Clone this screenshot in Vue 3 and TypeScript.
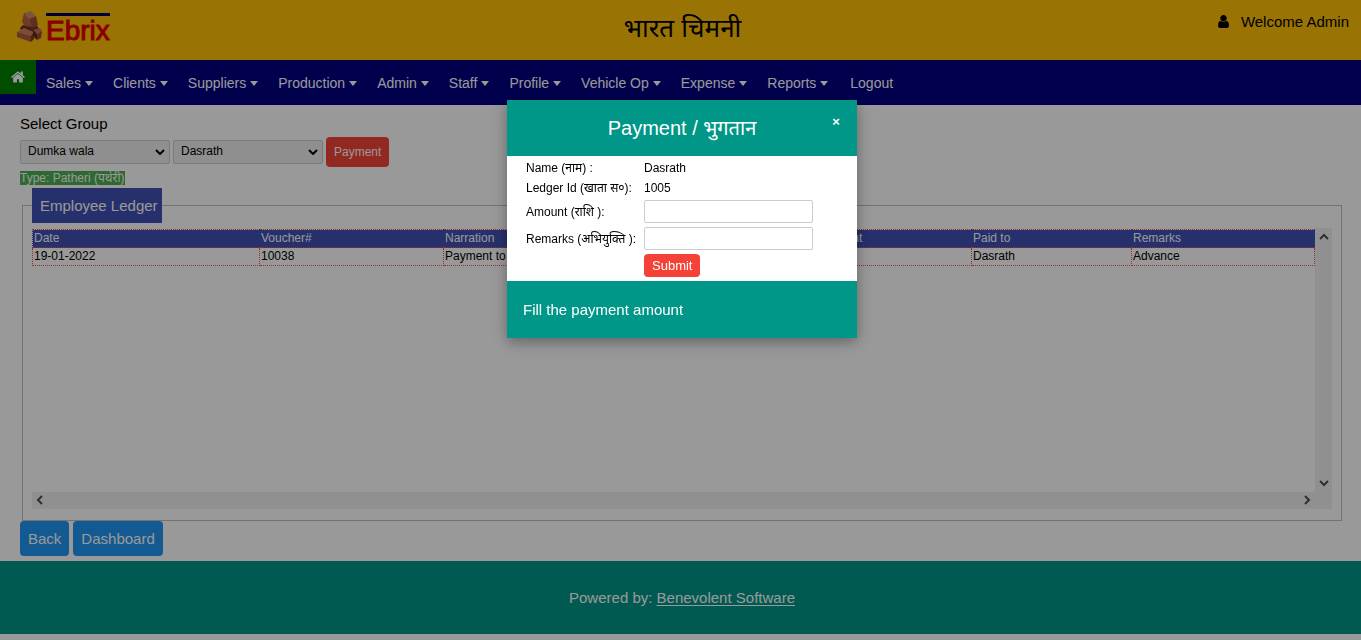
<script setup lang="ts">
import { ref } from 'vue'

interface LedgerRow {
  date: string
  voucher: string
  narration: string
  amount: string
  paidTo: string
  remarks: string
}

const menus: string[] = ['Sales', 'Clients', 'Suppliers', 'Production', 'Admin', 'Staff', 'Profile', 'Vehicle Op', 'Expense', 'Reports']
const columns: string[] = ['Date', 'Voucher#', 'Narration', 'Amount', 'Paid to', 'Remarks']
const rows: LedgerRow[] = [
  { date: '19-01-2022', voucher: '10038', narration: 'Payment to Dasrath', amount: '', paidTo: 'Dasrath', remarks: 'Advance' },
]

const group = ref('Dumka wala')
const employee = ref('Dasrath')
const amount = ref('')
const remarks = ref('')
const modalOpen = ref(true)
</script>

<template>
  <div class="page">
    <header class="banner">
      <a class="logo" href="#" aria-label="Ebrix">
        <svg class="bricks" viewBox="0 0 27 34" aria-hidden="true">
          <path d="M4 18l3-3 14 1 3 4-8 5-10-3z" fill="#74331f" />
          <path d="M1 22l7-4 10 4-3 4z" fill="#c98062" />
          <path d="M1 22l14 4v6L1 27z" fill="#b05a3e" />
          <path d="M15 26l3-4v7l-3 3z" fill="#7a3624" />
          <path d="M17 20l7-2 2 3-5 3z" fill="#c07656" />
          <path d="M21 24l5-3-1 7-4 2z" fill="#9a4a32" />
          <path d="M17 20l4 4v6l-3-3z" fill="#5e2818" />
          <path d="M8 3l7-2 5 5-7 3z" fill="#cf8a6a" />
          <path d="M8 3l5 6 4 8-8-1-3-4z" fill="#b86246" />
          <path d="M13 9l7-3 2 9-5 3z" fill="#a04e36" />
        </svg>
        <span class="brand">Ebrix</span>
      </a>
      <h1>भारत चिमनी</h1>
      <div class="welcome">
        <svg viewBox="256 128 1280 1536" aria-hidden="true">
          <path d="M1536 1399q0 109-62.500 187t-150.500 78h-854q-88 0-150.500-78t-62.500-187q0-85 8.500-160.500t31.500-152 58.500-131 94-89 134.500-34.500q131 128 313 128t313-128q76 0 134.500 34.500t94 89 58.500 131 31.500 152 8.500 160.500zm-256-887q0 159-112.500 271.500t-271.500 112.500-271.500-112.500-112.500-271.500 112.500-271.500 271.500-112.500 271.500 112.500 112.500 271.500z" />
        </svg>
        <span>Welcome Admin</span>
      </div>
    </header>

    <nav class="menu">
      <a class="home" href="#" aria-label="Home">
        <svg viewBox="0 224 1664 1344" aria-hidden="true">
          <path d="M1408 992v480q0 26-19 45t-45 19h-384v-384h-256v384h-384q-26 0-45-19t-19-45v-480q0-1 .5-3t.5-3l575-474 575 474q1 2 1 6zm223-69l-62 74q-8 9-21 11h-3q-13 0-21-7l-692-577-692 577q-12 8-24 7-13-2-21-11l-62-74q-8-10-7-23.500t11-21.500l719-599q32-26 76-26t76 26l244 204v-195q0-14 9-23t23-9h192q14 0 23 9t9 23v408l219 182q10 8 11 21.500t-7 23.500z" />
        </svg>
      </a>
      <a v-for="item in menus" :key="item" class="item" href="#">
        {{ item }}<span class="caret"></span>
      </a>
      <a class="item logout" href="#">Logout</a>
    </nav>

    <main>
      <label class="group-label" for="group">Select Group</label>
      <div class="filters">
        <div class="select">
          <select id="group" v-model="group"><option>Dumka wala</option></select>
          <svg viewBox="0 0 10 6" aria-hidden="true"><path d="M1 1l4 4 4-4" /></svg>
        </div>
        <div class="select">
          <select v-model="employee" aria-label="Employee"><option>Dasrath</option></select>
          <svg viewBox="0 0 10 6" aria-hidden="true"><path d="M1 1l4 4 4-4" /></svg>
        </div>
        <button class="pay" type="button" @click="modalOpen = true">Payment</button>
      </div>
      <div class="type"><span>Type: Patheri (पथेरी)</span></div>

      <fieldset>
        <legend>Employee Ledger</legend>
        <div class="scroller">
          <div class="view">
            <table class="ledger">
              <colgroup>
                <col class="c-date" /><col class="c-voucher" /><col /><col class="c-amount" /><col class="c-paid" /><col class="c-remarks" />
              </colgroup>
              <thead>
                <tr><th v-for="c in columns" :key="c" scope="col">{{ c }}</th></tr>
              </thead>
              <tbody>
                <tr v-for="r in rows" :key="r.voucher">
                  <td>{{ r.date }}</td>
                  <td>{{ r.voucher }}</td>
                  <td>{{ r.narration }}</td>
                  <td>{{ r.amount }}</td>
                  <td>{{ r.paidTo }}</td>
                  <td>{{ r.remarks }}</td>
                </tr>
              </tbody>
            </table>
          </div>
          <div class="bar vertical" aria-hidden="true">
            <svg viewBox="0 0 10 8"><path d="M1 6l4-4 4 4" /></svg>
            <svg viewBox="0 0 10 8"><path d="M1 2l4 4 4-4" /></svg>
          </div>
          <div class="bar horizontal" aria-hidden="true">
            <svg viewBox="0 0 8 10"><path d="M6 1L2 5l4 4" /></svg>
            <svg viewBox="0 0 8 10"><path d="M2 1l4 4-4 4" /></svg>
          </div>
          <div class="bar"></div>
        </div>
      </fieldset>

      <div class="actions">
        <button type="button">Back</button>
        <button type="button">Dashboard</button>
      </div>
    </main>

    <footer class="foot">Powered by: <a href="#">Benevolent Software</a></footer>

    <div v-if="modalOpen" class="overlay">
      <section class="modal" role="dialog" aria-modal="true" aria-labelledby="modal-title">
        <header class="modal-head">
          <h2 id="modal-title">Payment / भुगतान</h2>
          <button class="close" type="button" aria-label="Close" @click="modalOpen = false">×</button>
        </header>
        <form class="form" @submit.prevent>
          <span class="short">Name (नाम) :</span><span>Dasrath</span>
          <span class="short">Ledger Id (खाता स०):</span><span>1005</span>
          <label for="amount">Amount (राशि ):</label><input id="amount" v-model="amount" type="text" />
          <label for="remarks">Remarks (अभियुक्ति ):</label><input id="remarks" v-model="remarks" type="text" />
          <button class="submit" type="submit">Submit</button>
        </form>
        <footer class="modal-foot">Fill the payment amount</footer>
      </section>
    </div>
  </div>
</template>

<style>
body {
  margin: 0;
  background: #fff;
}
</style>

<style scoped>
.page {
  min-height: 100vh;
  font: 15px/22px "Liberation Sans", Arial, "Noto Sans", sans-serif;
  color: #000;
}
.page *,
.page *::before {
  box-sizing: border-box;
}
button,
input,
select {
  font-family: inherit;
}
button {
  border: 0;
  cursor: pointer;
  color: #fff;
}
h1,
h2 {
  margin: 0;
  font-weight: 400;
}
.banner {
  display: grid;
  grid-template-columns: 1fr auto 1fr;
  height: 60px;
  padding: 0 12px 0 16px;
  background: #ffc107;
}
.logo {
  display: flex;
  align-items: flex-start;
  padding-top: 10px;
  text-decoration: none;
  color: #e60000;
}
.bricks {
  width: 27px;
  height: 34px;
}
.brand {
  margin: 3px 0 0 3px;
  border-top: 3px solid #000060;
  font-size: 28px;
  line-height: 30px;
  -webkit-text-stroke: 1px #e60000;
}
h1 {
  padding-top: 8px;
  font-size: 26px;
  line-height: 40px;
}
.welcome {
  display: flex;
  justify-content: flex-end;
  gap: 12px;
  padding-top: 11px;
}
.welcome svg {
  width: 11px;
  height: 13px;
  margin-top: 4px;
}
.menu {
  display: flex;
  align-items: flex-start;
  height: 45px;
  background: #000080;
}
.menu a {
  color: #fff;
  text-decoration: none;
}
.home {
  display: flex;
  align-items: center;
  justify-content: center;
  width: 36px;
  height: 34px;
  background: #008000;
}
.home svg {
  width: 14px;
  height: 12px;
  fill: #fff;
}
.item {
  display: flex;
  align-items: center;
  gap: 4px;
  padding: 12px 10px;
  font-size: 14px;
}
.logout {
  padding-left: 12px;
}
.caret {
  border: 4px solid transparent;
  border-top: 5px solid #fff;
  border-bottom: 0;
}
main {
  padding: 8px 20px 5px;
}
.group-label {
  display: block;
}
.filters {
  display: flex;
  align-items: center;
  gap: 3px;
  margin-top: 2px;
}
.select {
  position: relative;
}
select {
  display: block;
  appearance: none;
  width: 150px;
  height: 24px;
  padding: 0 7px 2px;
  border: 1px solid #ccc;
  border-radius: 2px;
  background: #efefef;
  color: #000;
  font-size: 12px;
}
.select svg {
  position: absolute;
  right: 5px;
  top: 9px;
  width: 10px;
  height: 6px;
  pointer-events: none;
}
.select path,
.bar path {
  fill: none;
  stroke: #000;
  stroke-width: 2;
}
.bar path {
  stroke: #505050;
}
.pay {
  height: 30px;
  padding: 0 8px;
  border-radius: 4px;
  background: #f44336;
  font-size: 12px;
}
.type {
  height: 21px;
  padding-top: 4px;
  font-size: 12px;
  line-height: 14px;
}
.type span {
  display: inline-block;
  background: #4caf50;
  color: #fff;
}
fieldset {
  min-width: 0;
  margin: 0 -1px 0 2px;
  padding: 5px 9px 11px;
  border: 1px solid #c0c0c0;
}
legend {
  padding: 7px 4px 6px 8px;
  background: #3f51b5;
  color: #fff;
}
.scroller {
  display: grid;
  grid-template-columns: minmax(0, 1fr) 17px;
  grid-template-rows: 264px 17px;
}
.view {
  overflow: hidden;
  padding-top: 1px;
}
.bar {
  display: flex;
  justify-content: space-between;
  align-items: center;
  background: #f0f0f0;
}
.vertical {
  flex-direction: column;
  padding: 5px 0;
}
.horizontal {
  padding: 0 4px 1px;
}
.vertical svg {
  width: 10px;
  height: 8px;
}
.horizontal svg {
  width: 8px;
  height: 10px;
}
.ledger {
  width: 100%;
  table-layout: fixed;
  border-collapse: collapse;
  font-size: 12px;
  line-height: 17px;
}
.c-date {
  width: 227px;
}
.c-voucher {
  width: 184px;
}
.c-amount {
  width: 152px;
}
.c-paid {
  width: 160px;
}
.c-remarks {
  width: 183px;
}
th,
td {
  padding: 0 1px;
  border: 1px dotted #ff4d4d;
  text-align: left;
  font-weight: 400;
}
th {
  background: #3f51b5;
  color: #fff;
  border-left-color: #3f51b5;
  border-right-color: #3f51b5;
}
.actions {
  display: flex;
  gap: 4px;
}
.actions button {
  height: 35px;
  padding: 0 8px;
  border-radius: 4px;
  background: #2196f3;
  font-size: 15px;
}
.foot {
  padding: 26px 0 25px 3px;
  background: #009688;
  color: #fff;
  text-align: center;
}
.foot a {
  color: inherit;
  text-underline-offset: 2px;
}
.overlay {
  position: fixed;
  inset: 0;
  padding: 100px 0 0 3px;
  background: rgba(0, 0, 0, 0.4);
}
.modal {
  width: 350px;
  margin: 0 auto;
  background: #fff;
  box-shadow: 0 4px 10px rgba(0, 0, 0, 0.2), 0 4px 20px rgba(0, 0, 0, 0.19);
}
.modal-head {
  position: relative;
  padding: 8px 0;
  background: #009688;
  color: #fff;
  text-align: center;
}
h2 {
  font-size: 20px;
  line-height: 40px;
}
.close {
  position: absolute;
  top: 9px;
  right: 12px;
  width: 18px;
  height: 24px;
  padding: 0;
  background: none;
  font-size: 13px;
  font-weight: 700;
}
.form {
  display: grid;
  grid-template-columns: 114px 169px;
  align-items: center;
  gap: 4px;
  padding: 4px 19px;
  font-size: 12px;
  line-height: 16px;
}
.form label,
.short {
  white-space: nowrap;
}
input {
  height: 23px;
  padding: 0 4px;
  border: 1px solid #ccc;
  border-radius: 2px;
  font-size: 12px;
}
.submit {
  grid-column: 2;
  justify-self: start;
  height: 23px;
  padding: 0 8px;
  border-radius: 4px;
  background: #f44336;
  font-size: 13px;
}
.modal-foot {
  padding: 18px 16px 17px;
  background: #009688;
  color: #fff;
}
</style>
